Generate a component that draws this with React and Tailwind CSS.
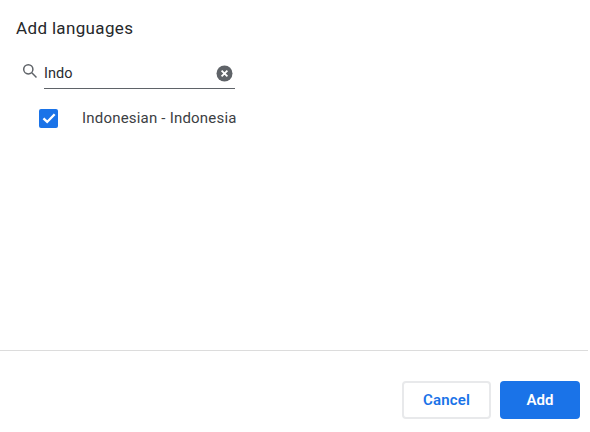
import React from "react";

export default function App() {
  return (
    <div className="w-[590px] h-[432px] bg-white flex flex-col overflow-hidden font-['Roboto',sans-serif]">
      <div className="h-[351px] border-b border-[#dcdcdc] w-[588px] shrink-0 flex flex-col">
        <h1 className="pl-4 pt-[17px] text-[17px] leading-[22px] font-normal text-[#26282b] tracking-[0.35px]">Add languages</h1>
        <div className="ml-[22px] mt-[16px] w-[213px] flex items-center h-[34px]">
          <svg width="16" height="16" viewBox="0 0 16 16" fill="none" stroke="#5f6368" strokeWidth="1.5" className="shrink-0 mr-[6px] mb-[3px]">
            <circle cx="6.3" cy="6.3" r="4.6" />
            <path d="M9.8 9.8 L14.5 14.5" />
          </svg>
          <div className="flex-1 h-full border-b border-[#5f6368] flex items-center justify-between pr-[1px]">
            <span className="text-[14.5px] text-[#2a2c2f] leading-none mt-[5px]">Indo</span>
            <svg width="17" height="17" viewBox="0 0 17 17" className="mt-[4px] mr-[1px]">
              <circle cx="8.5" cy="8.5" r="8" fill="#5f6368" />
              <path d="M5.6 5.6 L11.4 11.4 M11.4 5.6 L5.6 11.4" stroke="#fff" strokeWidth="1.8" />
            </svg>
          </div>
        </div>
        <div className="flex items-center ml-[39px] mt-[18px]">
          <span className="w-[19px] h-[19px] rounded-[2px] bg-[#1a73e8] flex items-center justify-center shrink-0">
            <svg width="16" height="16" viewBox="0 0 15 15" fill="none" stroke="#fff" strokeWidth="2.2">
              <path d="M2.3 7.8 L5.8 11.2 L12.8 4" />
            </svg>
          </span>
          <span className="ml-[24px] text-[15px] text-[#3c4043] tracking-[0.2px] whitespace-nowrap">Indonesian - Indonesia</span>
        </div>
      </div>
      <div className="flex justify-end gap-[9px] pr-[10px] pt-[30px]">
        <button className="w-[89px] h-[38px] rounded-[4px] border-2 border-[#e8e9eb] bg-white text-[#1a73e8] text-[15px] font-semibold tracking-[0.2px]">Cancel</button>
        <button className="w-[80px] h-[38px] rounded-[4px] bg-[#1a73e8] text-white text-[15px] font-semibold">Add</button>
      </div>
    </div>
  );
}
